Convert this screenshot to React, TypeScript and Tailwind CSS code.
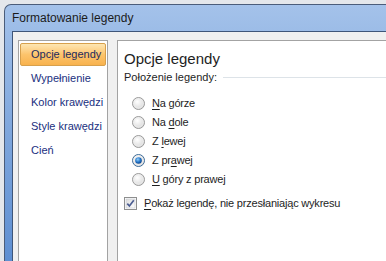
import React from "react"

const FONT = { fontFamily: '"Liberation Sans", Arial, sans-serif' }

const NAV = ["Opcje legendy", "Wypełnienie", "Kolor krawędzi", "Style krawędzi", "Cień"]

// label split into [before, accelerator, after]
const OPTIONS: [string, string, string][] = [
  ["", "N", "a górze"],
  ["Na ", "d", "ole"],
  ["Z ", "l", "ewej"],
  ["Z pr", "a", "wej"],
  ["", "U", " góry z prawej"],
]

function Radio({ checked }: { checked: boolean }) {
  return (
    <svg width="13" height="13" viewBox="0 0 13 13" className="shrink-0">
      <defs>
        <radialGradient id="rg" cx="40%" cy="35%" r="70%">
          <stop offset="0%" stopColor="#ffffff" />
          <stop offset="100%" stopColor="#d6d6d6" />
        </radialGradient>
        <radialGradient id="dot" cx="40%" cy="35%" r="70%">
          <stop offset="0%" stopColor="#8fd0ff" />
          <stop offset="60%" stopColor="#1f6fc2" />
          <stop offset="100%" stopColor="#0d3f86" />
        </radialGradient>
      </defs>
      <circle cx="6.5" cy="6.5" r="6" fill="url(#rg)" stroke={checked ? "#3d6c99" : "#9a9a9a"} strokeWidth="1" />
      <circle cx="6.5" cy="6.5" r="4.6" fill="none" stroke="#eeeeee" strokeWidth="0.8" />
      {checked && <circle cx="6.5" cy="6.5" r="3.3" fill="url(#dot)" />}
    </svg>
  )
}

function Checkbox() {
  return (
    <svg width="13" height="13" viewBox="0 0 13 13" className="shrink-0">
      <defs>
        <linearGradient id="cb" x1="0" y1="0" x2="1" y2="1">
          <stop offset="0%" stopColor="#dcdcdc" />
          <stop offset="100%" stopColor="#ffffff" />
        </linearGradient>
      </defs>
      <rect x="0.5" y="0.5" width="12" height="12" fill="#ffffff" stroke="#8e8f8f" />
      <rect x="2" y="2" width="9" height="9" fill="url(#cb)" stroke="#c4c7cc" strokeWidth="0.6" />
      <path d="M3.3 6.6 L5.4 9 L9.8 3.2" fill="none" stroke="#4b5d92" strokeWidth="1.7" />
    </svg>
  )
}

export default function App() {
  return (
    <div className="w-[386px] h-[261px] overflow-hidden bg-[#e4e7eb] pt-[4px] pl-[4px]" style={FONT}>
      <div className="h-[257px] flex flex-col rounded-tl-[7px] border-t border-l border-[#4b5d7a] bg-gradient-to-b from-[#a4c2ea] via-[#7ea6dc] to-[#5e8fd2]">
        <div className="h-[26px] shrink-0 flex items-center pl-[7px] text-[12px] text-[#1b1b1b]">
          Formatowanie legendy
        </div>
        <div className="flex-1 ml-[7px] border-t border-l border-[#3f5679] bg-[#f0f0f0] flex pt-[8px] pl-[5px] gap-[9px]">
          {/* nav */}
          <div className="w-[90px] shrink-0 bg-white border border-[#a3a3a3] border-b-0 p-[1px] pt-[2px] flex flex-col">
            {NAV.map((n, i) =>
              i === 0 ? (
                <div
                  key={n}
                  className="h-[23px] flex items-center pl-[10px] text-[11px] text-[#1c2a5e] rounded-[2px] border border-[#d7a04c] bg-gradient-to-b from-[#fde6b2] via-[#fcc46c] to-[#f8b24d]"
                >
                  {n}
                </div>
              ) : (
                <div key={n} className="h-[24px] flex items-center pl-[11px] text-[11px] text-[#1a2f80]">
                  {n}
                </div>
              )
            )}
          </div>
          {/* content */}
          <div className="flex-1 bg-white border-t border-l border-[#a3a3a3] pl-[6px] pt-[8px] text-[#1e1e1e]">
            <div className="text-[15px] leading-[20px]">Opcje legendy</div>
            <div className="flex items-center gap-[6px] mt-[1px] h-[15px]">
              <span className="text-[11px] whitespace-nowrap">Położenie legendy:</span>
              <div className="flex-1 h-px bg-[#dde3e8]" />
            </div>
            <div className="flex flex-col pl-[8px] mt-[9px]">
              {OPTIONS.map(([a, b, c], i) => (
                <div key={i} className="h-[19px] flex items-center gap-[7px] text-[11px] tracking-[-0.2px]">
                  <Radio checked={i === 3} />
                  <span>
                    {a}
                    <span className="underline underline-offset-[2px]">{b}</span>
                    {c}
                  </span>
                </div>
              ))}
            </div>
            <div className="flex items-center gap-[7px] mt-[5px] h-[19px] text-[11px] tracking-[-0.2px]">
              <Checkbox />
              <span className="whitespace-nowrap">
                <span className="underline underline-offset-[2px]">P</span>okaż legendę, nie przesłaniając wykresu
              </span>
            </div>
          </div>
        </div>
      </div>
    </div>
  )
}
